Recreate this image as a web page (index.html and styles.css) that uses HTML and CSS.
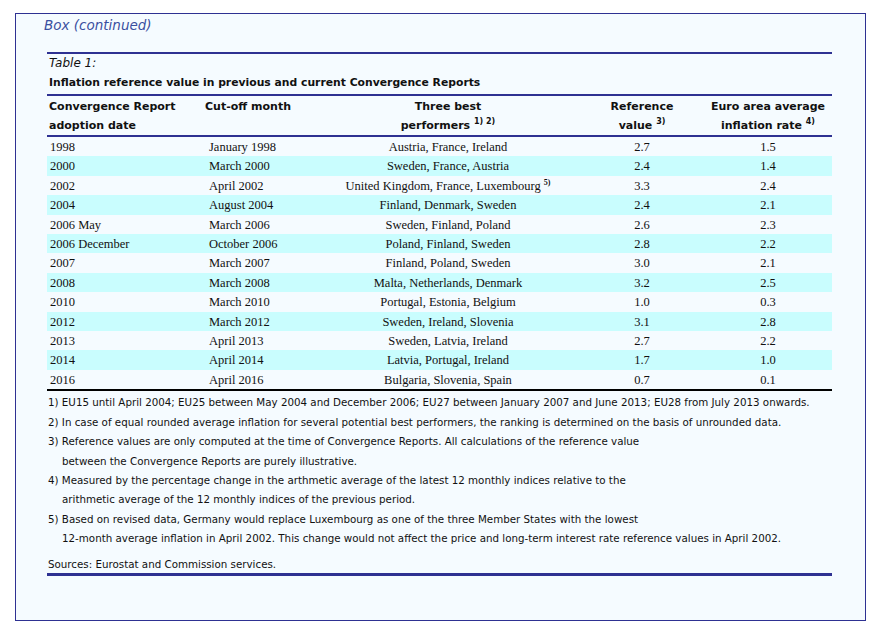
FILE: index.html
```html
<!DOCTYPE html>
<html>
<head>
<meta charset="utf-8">
<link rel="stylesheet" href="styles.css">
</head>
<body>
<div class="box">
  <div class="box-label">Box (continued)</div>
  <div class="panel">
    <div class="tbl-num">Table 1:</div>
    <div class="tbl-title">Inflation reference value in previous and current Convergence Reports</div>
    <table class="data">
      <colgroup>
        <col class="c1"><col class="c2"><col class="c3"><col class="c4"><col class="c5">
      </colgroup>
      <thead>
        <tr>
          <th class="l first">Convergence Report<br>adoption date</th>
          <th class="l second">Cut-off month</th>
          <th>Three best<br>performers <sup>1) 2)</sup></th>
          <th>Reference<br>value <sup>3)</sup></th>
          <th>Euro area average<br>inflation rate <sup>4)</sup></th>
        </tr>
      </thead>
      <tbody>
        <tr><td class="l first">1998</td><td class="l second">January 1998</td><td>Austria, France, Ireland</td><td>2.7</td><td>1.5</td></tr>
        <tr class="alt"><td class="l first">2000</td><td class="l second">March 2000</td><td>Sweden, France, Austria</td><td>2.4</td><td>1.4</td></tr>
        <tr><td class="l first">2002</td><td class="l second">April 2002</td><td>United Kingdom, France, Luxembourg <sup>5)</sup></td><td>3.3</td><td>2.4</td></tr>
        <tr class="alt"><td class="l first">2004</td><td class="l second">August 2004</td><td>Finland, Denmark, Sweden</td><td>2.4</td><td>2.1</td></tr>
        <tr><td class="l first">2006 May</td><td class="l second">March 2006</td><td>Sweden, Finland, Poland</td><td>2.6</td><td>2.3</td></tr>
        <tr class="alt"><td class="l first">2006 December</td><td class="l second">October 2006</td><td>Poland, Finland, Sweden</td><td>2.8</td><td>2.2</td></tr>
        <tr><td class="l first">2007</td><td class="l second">March 2007</td><td>Finland, Poland, Sweden</td><td>3.0</td><td>2.1</td></tr>
        <tr class="alt"><td class="l first">2008</td><td class="l second">March 2008</td><td>Malta, Netherlands, Denmark</td><td>3.2</td><td>2.5</td></tr>
        <tr><td class="l first">2010</td><td class="l second">March 2010</td><td>Portugal, Estonia, Belgium</td><td>1.0</td><td>0.3</td></tr>
        <tr class="alt"><td class="l first">2012</td><td class="l second">March 2012</td><td>Sweden, Ireland, Slovenia</td><td>3.1</td><td>2.8</td></tr>
        <tr><td class="l first">2013</td><td class="l second">April 2013</td><td>Sweden, Latvia, Ireland</td><td>2.7</td><td>2.2</td></tr>
        <tr class="alt"><td class="l first">2014</td><td class="l second">April 2014</td><td>Latvia, Portugal, Ireland</td><td>1.7</td><td>1.0</td></tr>
        <tr><td class="l first">2016</td><td class="l second">April 2016</td><td>Bulgaria, Slovenia, Spain</td><td>0.7</td><td>0.1</td></tr>
      </tbody>
    </table>
    <div class="notes">
      <p>1) EU15 until April 2004; EU25 between May 2004 and December 2006; EU27 between January 2007 and June 2013; EU28 from July 2013 onwards.</p>
      <p>2) In case of equal rounded average inflation for several potential best performers, the ranking is determined on the basis of unrounded data.</p>
      <p>3) Reference values are only computed at the time of Convergence Reports. All calculations of the reference value<br><span class="ind">between the Convergence Reports are purely illustrative.</span></p>
      <p>4) Measured by the percentage change in the arthmetic average of the latest 12 monthly indices relative to the<br><span class="ind">arithmetic average of the 12 monthly indices of the previous period.</span></p>
      <p>5) Based on revised data, Germany would replace Luxembourg as one of the three Member States with the lowest<br><span class="ind">12-month average inflation in April 2002. This change would not affect the price and long-term interest rate reference values in April 2002.</span></p>
    </div>
    <div class="sources">Sources: Eurostat and Commission services.</div>
  </div>
</div>
</body>
</html>
```

FILE: styles.css
```css
html, body {
  margin: 0;
  padding: 0;
  background: #ffffff;
}

body {
  padding: 13px 0 0 15px;
}

.box {
  width: 849px;
  height: 606px;
  border: 1px solid #2e3192;
  background: #f5fbff;
  box-sizing: content-box;
}

.box-label {
  font-family: "DejaVu Sans", sans-serif;
  font-style: italic;
  font-size: 13.5px;
  color: #3a4fa0;
  padding: 2px 0 0 28px;
  height: 19px;
  line-height: 19px;
}

.panel {
  margin: 17px 0 0 31px;
  width: 785px;
  border-top: 2px solid #2e3192;
  font-family: "DejaVu Sans", sans-serif;
  color: #111;
}

.tbl-num {
  font-style: italic;
  font-size: 12px;
  line-height: 15px;
  height: 15px;
  padding: 2px 0 0 2px;
}

.tbl-title {
  font-weight: bold;
  font-size: 10.8px;
  line-height: 23px;
  height: 23px;
  padding-left: 2px;
  border-bottom: 2px solid #2e3192;
}

table.data {
  width: 785px;
  border-collapse: collapse;
  table-layout: fixed;
}

col.c1 { width: 156px; }
col.c2 { width: 113px; }
col.c3 { width: 264px; }
col.c4 { width: 124px; }
col.c5 { width: 128px; }

thead th {
  font-family: "DejaVu Sans", sans-serif;
  font-weight: bold;
  font-size: 11px;
  line-height: 19px;
  padding: 1px 0 0 0;
  text-align: center;
  vertical-align: top;
  color: #111;
  border-bottom: 2px solid #2e3192;
}

th sup, td sup {
  font-size: 8px;
  line-height: 0;
  vertical-align: 5px;
}

td sup {
  font-family: "Liberation Serif", serif;
  font-weight: bold;
}

tbody td {
  font-family: "Liberation Serif", serif;
  font-size: 12.5px;
  height: 17.4px;
  line-height: 17.4px;
  padding: 2px 0 0 0;
  text-align: center;
  color: #111;
}

tbody tr.alt td {
  background: #c9fdfe;
}

th.l, td.l {
  text-align: left;
}

th.first { padding-left: 2px; }
td.first { padding-left: 3px; }
th.second { padding-left: 2px; }
td.second { padding-left: 6px; }

tbody tr:last-child td {
  border-bottom: 2px solid #000;
}

.notes {
  font-size: 10.3px;
  line-height: 19.4px;
  padding-top: 2px;
}

.notes p {
  margin: 0;
  padding-left: 1px;
}

.notes .ind {
  padding-left: 14px;
}

.sources {
  font-size: 10.3px;
  line-height: 17px;
  margin-top: 7px;
  padding-left: 1px;
  border-bottom: 3px solid #2e3192;
}
```
